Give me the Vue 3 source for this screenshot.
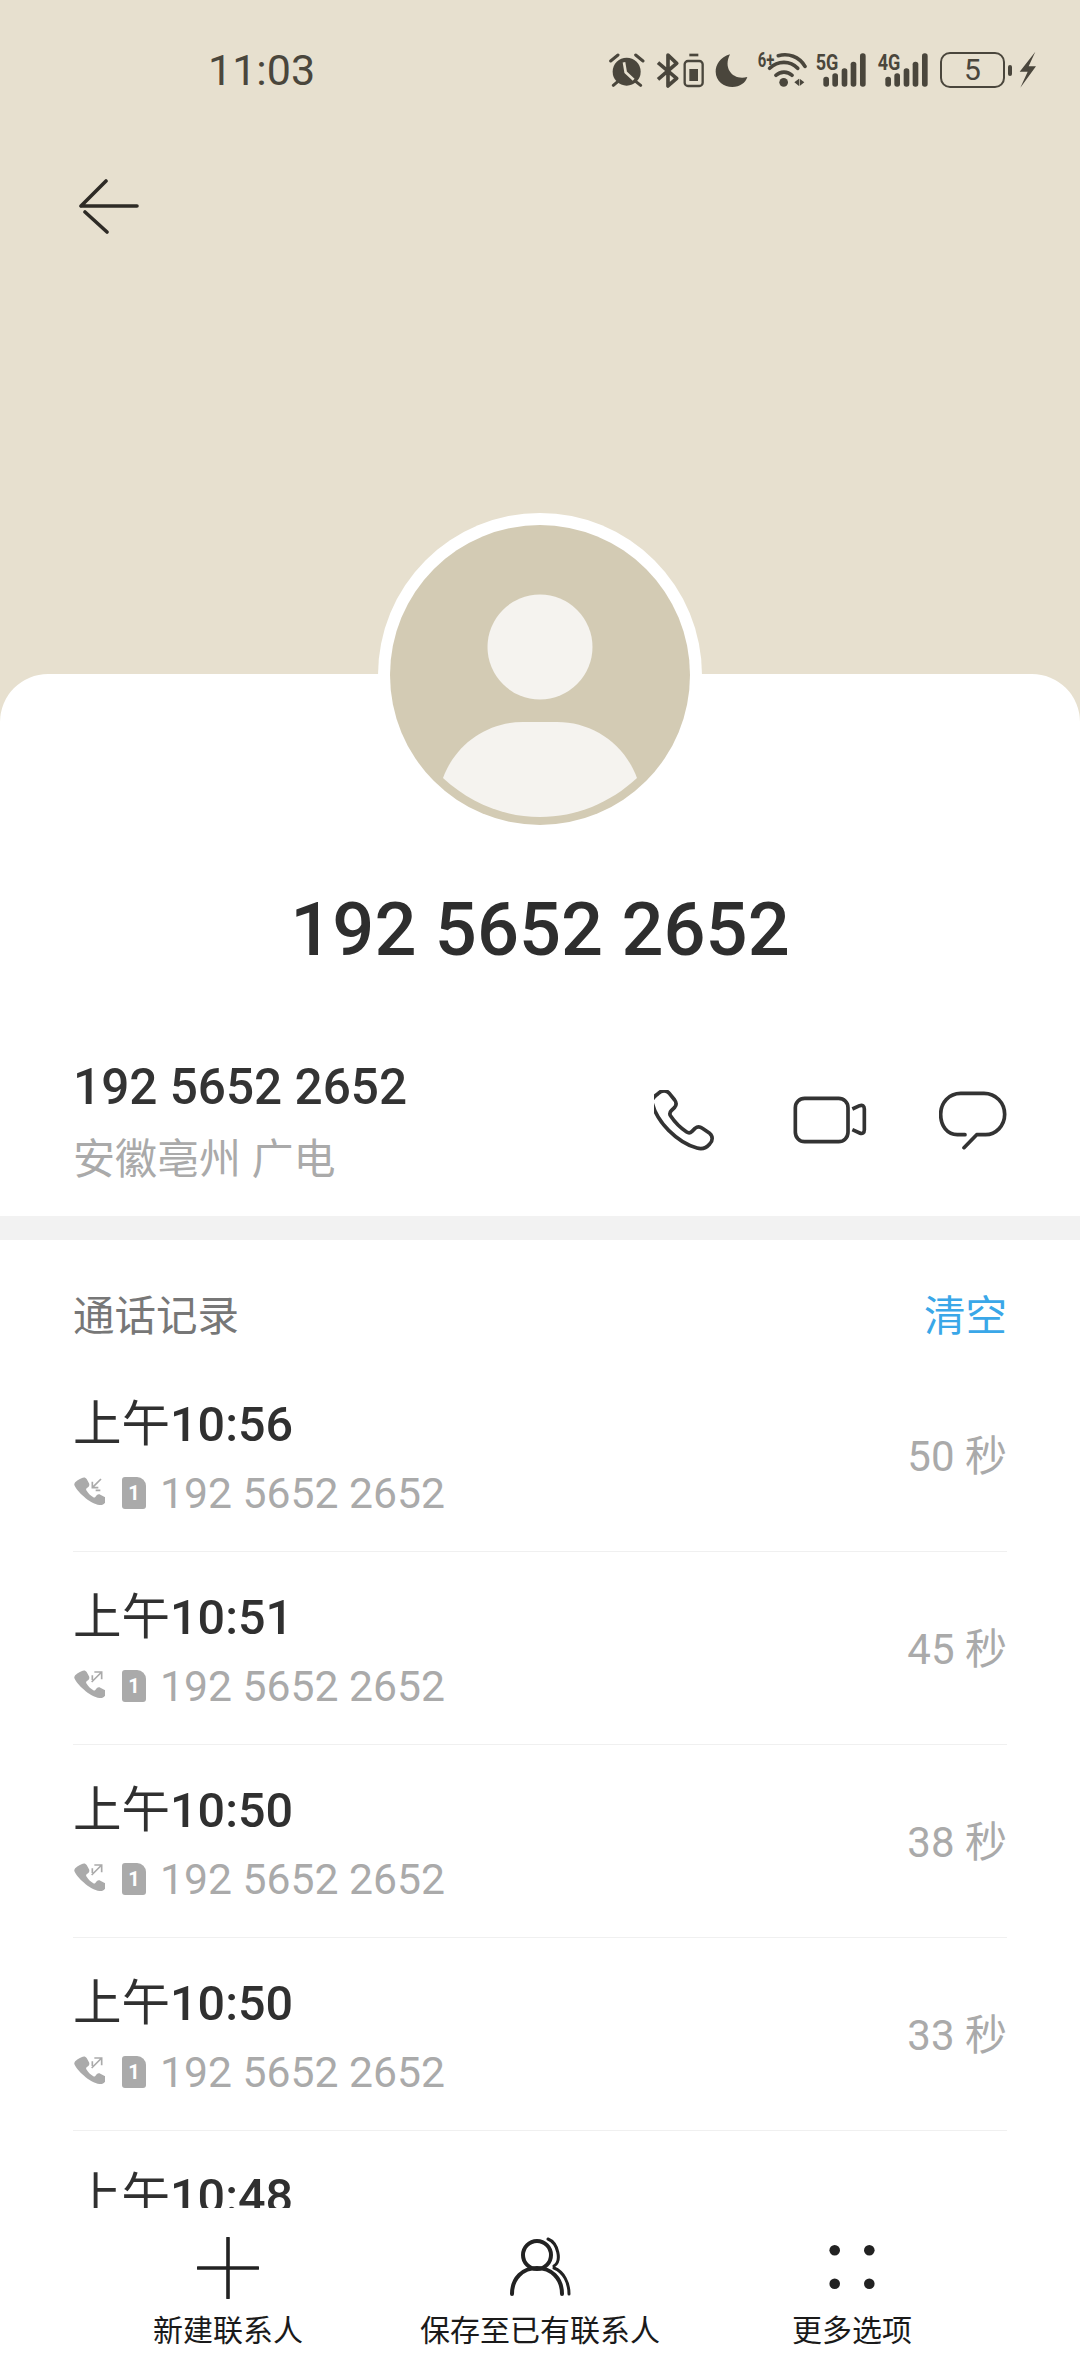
<script setup>
const calls = [
  { time: '10:56', dur: '50 秒', dir: 'in' },
  { time: '10:51', dur: '45 秒', dir: 'out' },
  { time: '10:50', dur: '38 秒', dir: 'out' },
  { time: '10:50', dur: '33 秒', dir: 'out' },
  { time: '10:48', dur: '', dir: 'out' },
]
const signals = [
  { label: '5G', cls: 'sig-5g' },
  { label: '4G', cls: 'sig-4g' },
]
const bars = [
  { x: 25, y: 135 },
  { x: 52, y: 125 },
  { x: 80, y: 110 },
  { x: 107, y: 90 },
  { x: 135, y: 65 },
]
const phoneD = 'M27 3c5-3 11-2 14 3l7 13c2 4 1 8-2 11l-5 4c-2 2-2 4-1 6 5 9 12 16 21 21 2 1 4 1 6-1l4-5c3-3 7-4 11-2l13 7c5 3 6 9 3 14-4 7-10 11-18 10C50 81 9 40 4 24 2 14 20 7 27 3z'
</script>

<template>
  <div class="page">
    <main class="main">
      <header class="hero">
        <div class="status">
          <span class="clock">11:03</span>
          <div class="status-icons">
            <svg class="si alarm" viewBox="85 60 107 112">
              <circle cx="138" cy="122" r="42" fill="#4a463c" />
              <path d="M130 94l5 30 24 22" fill="none" stroke="#e7e0cf" stroke-width="8" />
              <path d="M90 90l22-18M165 72l22 18M98 163l14-12M165 151l15 12" stroke="#4a463c" stroke-width="9" stroke-linecap="round" />
            </svg>
            <svg class="si bt" viewBox="226 60 68 112">
              <path d="M232 95l56 47-26 23V72l26 25-56 48" fill="none" stroke="#4a463c" stroke-width="11" stroke-linejoin="round" />
            </svg>
            <svg class="si cell" viewBox="306 60 63 112">
              <path d="M325 72h27" stroke="#4a463c" stroke-width="8" />
              <rect x="311" y="90" width="54" height="75" rx="10" fill="none" stroke="#4a463c" stroke-width="7" />
              <rect x="325" y="114" width="26" height="36" fill="#4a463c" />
            </svg>
            <svg class="si moon" viewBox="403 60 99 112">
              <path d="M448 70C418 78 405 103 405 122C405 150 430 168 455 168C478 168 495 155 500 138C460 150 425 115 448 70Z" fill="#4a463c" />
            </svg>
            <svg class="si tall wifi" viewBox="528 40 152 152">
              <text x="530" y="105" class="net-label" textLength="50" lengthAdjust="spacingAndGlyphs">6+</text>
              <path d="M592 72c30-8 62 2 80 32M566 110c24-24 62-24 84 0M585 131c13-13 35-13 48 0" fill="none" stroke="#4a463c" stroke-width="11" stroke-linecap="round" />
              <circle cx="608" cy="152" r="13" fill="#4a463c" />
              <path d="M640 152l14-11v22zM656 141l14 11-14 11z" fill="#4a463c" />
            </svg>
            <svg v-for="s in signals" :key="s.label" class="si tall signal" :class="s.cls" viewBox="0 40 155 152">
              <text x="2" y="115" class="net-label big" textLength="68" lengthAdjust="spacingAndGlyphs">{{ s.label }}</text>
              <rect v-for="b in bars" :key="b.x" :x="b.x" :y="b.y" width="17" :height="165 - b.y" rx="8" fill="#4a463c" />
            </svg>
            <div class="battery"><span>5</span></div>
            <span class="battery-tip"></span>
            <svg class="si bolt" viewBox="1316 60 51 112">
              <path d="M1365 62L1318 122H1342L1320 170L1367 106H1345Z" fill="#4a463c" />
            </svg>
          </div>
        </div>
        <svg class="back" width="60" height="56" viewBox="0 0 60 56">
          <path d="M2 28h56M2 28L27 3M6 34l22 20" fill="none" stroke="#2e2b26" stroke-width="3.600" stroke-linecap="round" />
        </svg>
        <div class="avatar">
          <svg width="300" height="300" viewBox="0 0 300 300">
            <circle cx="150" cy="150" r="150" fill="#d3cbb4" />
            <circle cx="150" cy="122" r="52.500" fill="#f5f3ef" />
            <path d="M53 253C66 218 98 197 133 197H167C202 197 234 218 247 253C220 278 186 292 150 292C114 292 80 278 53 253Z" fill="#f5f3ef" />
          </svg>
        </div>
      </header>

      <section class="card">
        <h1 class="name">192 5652 2652</h1>
        <div class="contact">
          <div class="contact-text">
            <div class="number">192 5652 2652</div>
            <div class="place">安徽亳州 广电</div>
          </div>
          <svg class="act phone" width="62" height="62" viewBox="100 90 186 186">
            <path d="M113 100c10-10 25-10 33 0l16 20c6 8 5 16 0 22l-10 10c-6 6-6 10-2 16 12 18 30 36 48 48 6 4 10 4 16-2l9-9c6-5 14-6 22 0l22 15c10 8 10 22 0 32-10 12-24 16-38 12-30-8-60-28-85-53-25-25-43-55-50-84-3-12 8-17 19-27z" fill="none" stroke="#333" stroke-width="11" stroke-linejoin="round" />
          </svg>
          <svg class="act video" width="74" height="50" viewBox="515 108 222 150">
            <rect x="522" y="115" width="158" height="130" rx="28" fill="none" stroke="#333" stroke-width="11" />
            <path d="M693 147l22-10c8-3 14 1 14 10v62c0 10-6 14-14 10l-22-10" fill="none" stroke="#333" stroke-width="11" stroke-linejoin="round" />
          </svg>
          <svg class="act chat" width="68" height="60" viewBox="955 95 204 180">
            <path d="M1033 226H1010C980 226 960 200 960 165C960 130 985 102 1020 102H1090C1125 102 1152 130 1152 165C1152 200 1125 226 1095 226H1068L1030 265" fill="none" stroke="#333" stroke-width="11" stroke-linecap="round" stroke-linejoin="round" />
          </svg>
        </div>
      </section>

      <section class="log">
        <div class="log-head">
          <span class="log-title">通话记录</span>
          <span class="clear">清空</span>
        </div>
        <div v-for="(c, i) in calls" :key="i" class="row">
          <div class="row-text">
            <div class="time">上午<span class="digits">{{ c.time }}</span></div>
            <div v-if="c.dur" class="sub">
              <svg class="call-ic" width="32" height="32" viewBox="0 0 96 96">
                <path :d="phoneD" fill="#aaa" />
                <path v-if="c.dir === 'in'" d="M84 6L58 32M58 14v18h18M68 40h14" fill="none" stroke="#aaa" stroke-width="5" />
                <path v-else d="M56 36L86 6M64 6h22v22M58 16v14" fill="none" stroke="#aaa" stroke-width="5" />
              </svg>
              <span class="sim"><span>1</span></span>
              <span class="sub-num">192 5652 2652</span>
            </div>
          </div>
          <span v-if="c.dur" class="dur">{{ c.dur }}</span>
        </div>
      </section>
    </main>

    <nav class="bar">
      <div class="tool tool-a">
        <svg width="62" height="62" viewBox="0 0 62 62">
          <path d="M31 1v60M1 31h60" stroke="#222" stroke-width="3.600" stroke-linecap="round" />
        </svg>
        <span>新建联系人</span>
      </div>
      <div class="tool tool-b">
        <svg width="64" height="62" viewBox="0 0 64 62">
          <circle cx="29" cy="18" r="14" fill="none" stroke="#222" stroke-width="4" />
          <path d="M4 57C4 41 15 31 29 31S54 41 54 57" fill="none" stroke="#222" stroke-width="4" stroke-linecap="round" />
          <path d="M40 2C50 6 54 24 46 29M46 31C56 35 61 46 61 57" fill="none" stroke="#222" stroke-width="3" stroke-linecap="round" />
        </svg>
        <span>保存至已有联系人</span>
      </div>
      <div class="tool tool-c">
        <svg width="62" height="62" viewBox="0 0 62 62">
          <circle cx="13.700" cy="13.300" r="5.300" fill="#222" />
          <circle cx="48.300" cy="13.300" r="5.300" fill="#222" />
          <circle cx="13.700" cy="46.700" r="5.300" fill="#222" />
          <circle cx="48.300" cy="46.700" r="5.300" fill="#222" />
        </svg>
        <span>更多选项</span>
      </div>
    </nav>
  </div>
</template>

<style scoped>
.page {
  width: 1080px;
  height: 2376px;
  display: flex;
  flex-direction: column;
  overflow: hidden;
  background: #fff;
  font-family: Roboto, "Noto Sans CJK SC", sans-serif;
  color: #333;
}
.main {
  flex: 1;
  min-height: 0;
  overflow: hidden;
}
.hero {
  position: relative;
  height: 722px;
  box-sizing: border-box;
  background: #e7e0cf;
  padding-top: 50px;
}
.status {
  display: flex;
  justify-content: space-between;
  align-items: center;
  height: 40px;
  padding: 0 44px 0 208px;
}
.clock {
  font-size: 43px;
  color: #4a463c;
  line-height: 40px;
}
.status-icons {
  display: flex;
  align-items: center;
  height: 38px;
}
.si {
  display: block;
  height: 37.333px;
  flex: none;
}
.si.tall {
  height: 50.667px;
}
.alarm { width: 35.667px; }
.bt { width: 22.667px; margin-left: 11px; }
.cell { width: 21px; margin-left: 4px; }
.moon { width: 33px; margin-left: 11px; }
.wifi { width: 50.667px; margin-left: 9px; }
.signal { width: 51.667px; }
.sig-5g { margin-left: 8px; }
.sig-4g { margin-left: 10px; }
.bolt { width: 17px; margin-left: 7px; }
.net-label {
  font-size: 60px;
  font-weight: 700;
  fill: #4a463c;
}
.net-label.big {
  font-size: 66px;
}
.battery {
  margin-left: 11px;
  width: 65.667px;
  height: 36px;
  box-sizing: border-box;
  border: 2.600px solid #4a463c;
  border-radius: 10px;
  display: flex;
  align-items: center;
  justify-content: center;
  font-size: 30px;
  line-height: 30px;
  color: #4a463c;
}
.battery-tip {
  width: 4px;
  height: 11px;
  margin-left: 2.700px;
  border-radius: 2px;
  background: #4a463c;
}
.back {
  display: block;
  margin: 88px 0 0 79px;
}
.avatar {
  position: absolute;
  left: 378px;
  top: 513px;
  width: 324px;
  height: 324px;
  box-sizing: border-box;
  border-radius: 50%;
  background: #fff;
  padding: 12px;
  z-index: 2;
}
.avatar svg {
  display: block;
}
.card {
  position: relative;
  margin-top: -48px;
  padding-top: 206px;
  background: #fff;
  border-radius: 48px 48px 0 0;
}
.name {
  margin: 0;
  text-align: center;
  font-size: 74px;
  line-height: 100px;
  font-weight: 500;
  color: #2e2e2e;
}
.contact {
  display: flex;
  align-items: center;
  margin-top: 74px;
  padding: 0 73px 28px;
  height: 134px;
  border-bottom: 24px solid #f2f2f2;
}
.contact-text {
  flex: 1;
}
.number {
  font-size: 49.500px;
  line-height: 66px;
  font-weight: 500;
  color: #333;
}
.place {
  margin-top: 12px;
  font-size: 42px;
  line-height: 56px;
  color: #aaa;
}
.act {
  display: block;
  flex: none;
}
.video {
  margin-left: 77px;
}
.chat {
  margin-left: 72px;
}
.log {
  padding: 0 73px;
}
.log-head {
  display: flex;
  justify-content: space-between;
  height: 119px;
  padding: 35px 0 0;
  box-sizing: border-box;
  font-size: 41.500px;
  line-height: 84px;
}
.log-title {
  color: #777;
}
.clear {
  color: #3aa7e8;
}
.row {
  display: flex;
  justify-content: space-between;
  align-items: center;
  height: 193px;
  box-sizing: border-box;
  border-bottom: 1px solid #f0f0f0;
}
.row-text {
  height: 136px;
  padding-top: 8px;
}
.time {
  font-size: 48.500px;
  line-height: 68px;
  color: #303030;
}
.digits {
  font-weight: 500;
}
.sub {
  display: flex;
  align-items: center;
  height: 68px;
  color: #aaa;
}
.call-ic {
  display: block;
}
.sim {
  width: 24px;
  height: 32px;
  margin-left: 17px;
  background: #aaa;
  border-radius: 3px 9px 3px 3px;
  display: flex;
  align-items: center;
  justify-content: center;
  color: #fff;
  font-size: 20px;
  font-weight: 700;
}
.sub-num {
  margin-left: 14px;
  font-size: 42.700px;
  line-height: 68px;
}
.dur {
  margin-bottom: 6px;
  font-size: 42px;
  color: #aaa;
}
.bar {
  position: relative;
  flex: none;
  height: 168px;
  background: #fff;
  display: flex;
}
.tool {
  position: absolute;
  top: 29px;
  display: flex;
  flex-direction: column;
  align-items: center;
  font-size: 30px;
  font-weight: 400;
  line-height: 42px;
  color: #1a1a1a;
  transform: translateX(-50%);
  white-space: nowrap;
}
.tool svg {
  display: block;
  margin-bottom: 11px;
}
.tool-a {
  left: 228px;
}
.tool-b {
  left: 540px;
}
.tool-c {
  left: 852px;
}
</style>
